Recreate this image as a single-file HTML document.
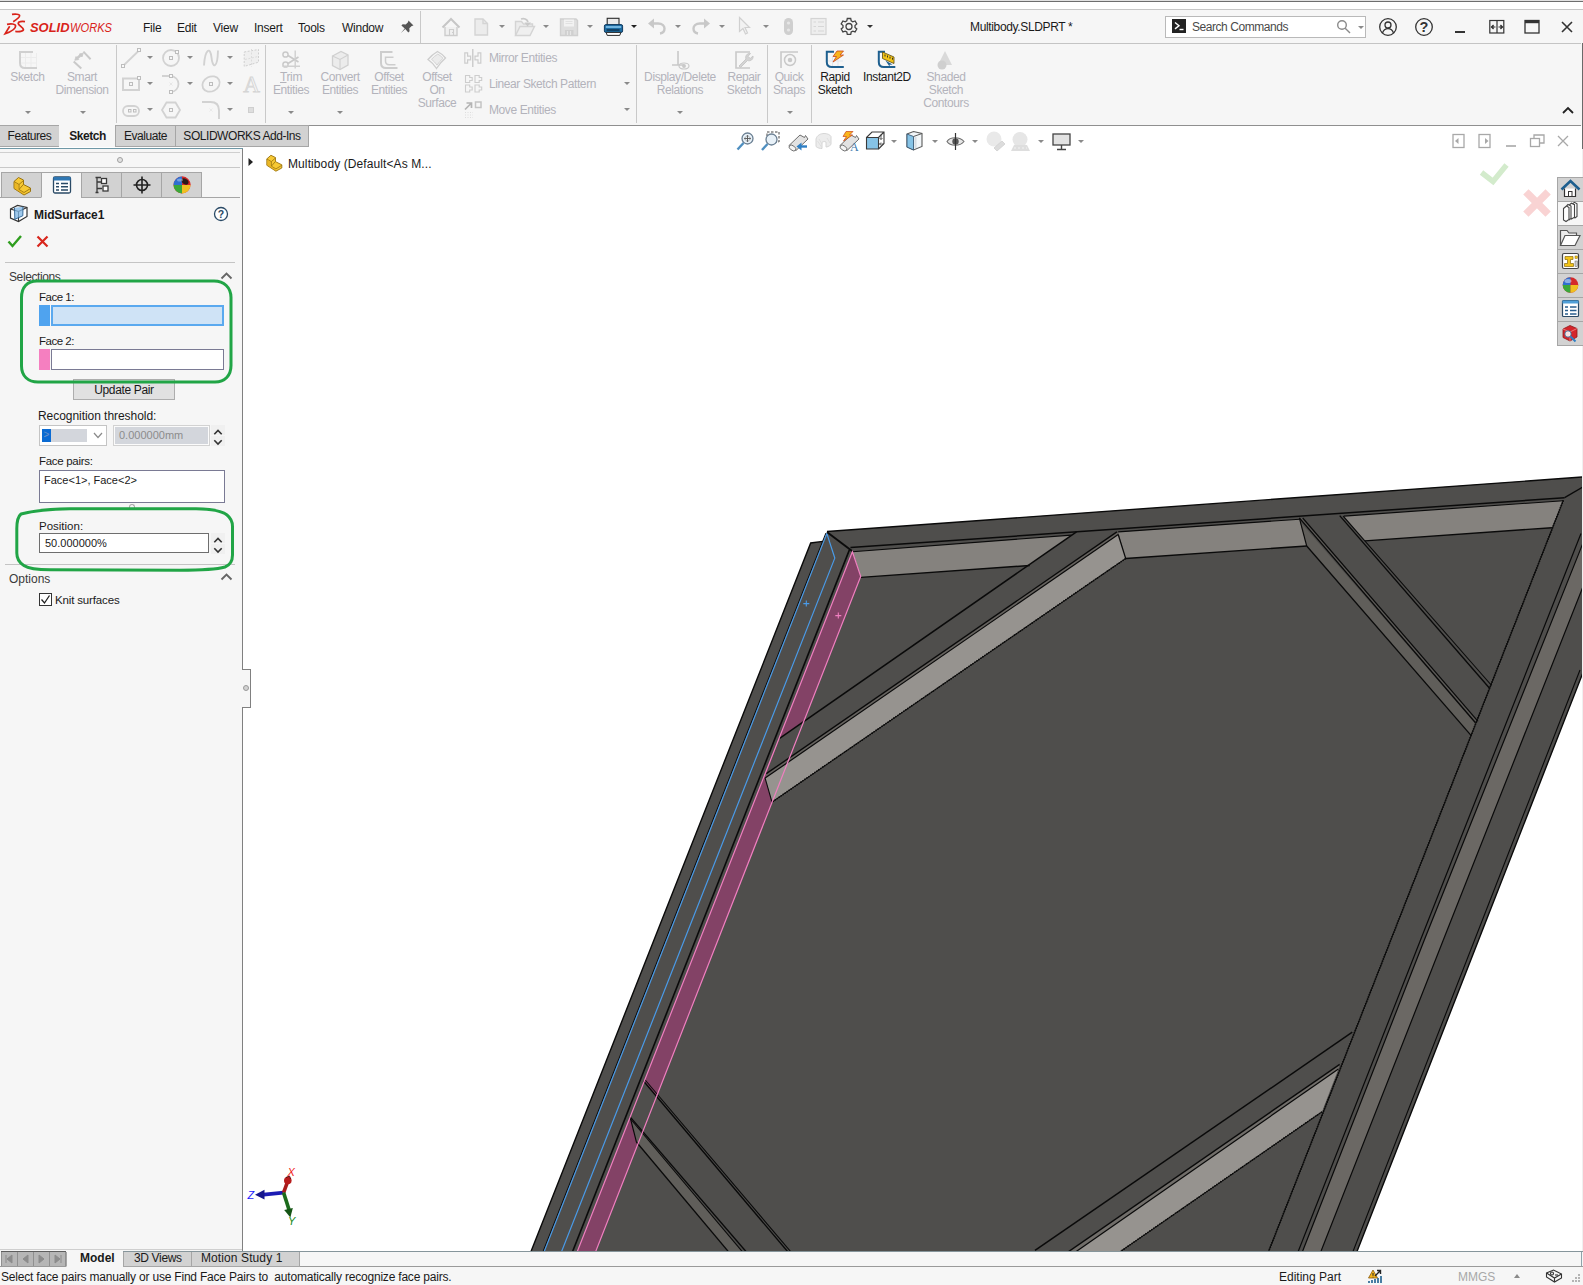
<!DOCTYPE html>
<html lang="en"><head><meta charset="utf-8"><title>SOLIDWORKS - Multibody.SLDPRT</title>
<style>
html,body{margin:0;padding:0}
body{width:1583px;height:1285px;position:relative;overflow:hidden;background:#fff;font-family:"Liberation Sans","DejaVu Sans",sans-serif;font-size:12px;color:#1a1a1a;line-height:1}
.a{position:absolute;white-space:nowrap}
.t{position:absolute;white-space:nowrap;line-height:14px;height:14px}
.dis{color:#b3b3bb}
.c{text-align:center}
.ls{letter-spacing:-.4px}
svg{position:absolute;overflow:visible}
.arr{position:absolute;width:0;height:0;border-left:3px solid transparent;border-right:3px solid transparent;border-top:3.500px solid #8a8a8a;margin-left:.5px;margin-top:.8px}
.arrd{border-top-color:#555}
.vsep{position:absolute;width:1px;background:#c9c9c9}
.tab{position:absolute;top:125px;height:22px;border-bottom:none;letter-spacing:-.45px;border:1px solid #a6a6a6;background:#d2d2d2;box-sizing:border-box;line-height:21px;font-size:12px;text-align:center;color:#1a1a1a}
.itab{position:absolute;top:172px;height:26px;border:1px solid #a6a6a6;background:#d2d2d2;box-sizing:border-box}
.btab{position:absolute;top:1252px;height:15px;letter-spacing:-.3px;border:1px solid #a6a6a6;border-top:none;background:#d2d2d2;box-sizing:border-box;line-height:13px;font-size:12px;text-align:center}
.tp{position:absolute;left:1557px;width:27px;z-index:3;height:25px;background:#d2d2d2;border:1px solid #a6a6a6;box-sizing:border-box}
</style></head>
<body>
<!-- ===== window top border + title bar ===== -->
<div class="a" style="left:0;top:0;width:1583px;height:1px;background:#e2e2e2"></div>
<div class="a" style="left:0;top:1px;width:1583px;height:1px;background:#6e6e6e"></div>
<div class="a" style="left:0;top:2px;width:1583px;height:7px;background:#fff"></div>
<div class="a" style="left:0;top:9px;width:1583px;height:1px;background:#c6c6c6"></div>
<div class="a" style="left:0;top:10px;width:1581px;height:116px;background:#f6f6f6"></div>
<div class="a" style="left:0;top:43px;width:1582px;height:1px;background:#c4c4c4"></div>
<div class="a" style="left:308px;top:125px;width:1274px;height:1px;background:#8f8f8f"></div>
<div class="a" style="left:1581px;top:10px;width:2px;height:116px;background:#f6f6f6"></div>
<div class="a" style="left:1582px;top:43px;width:1px;height:106px;background:#6a6a6a"></div>

<!-- logo -->
<svg style="left:0;top:10px" width="118" height="30" viewBox="0 10 118 30">
 <path d="M12 14.400C15 14 19.500 14 19.600 15.600C19.700 17.600 16 20 13.200 21.800" fill="none" stroke="#d9231a" stroke-width="1.700"/>
 <path d="M7 24.300C11 23.500 15.600 23.800 15.600 26C15.600 29 10 32 5.200 33.600L9.700 26.300" fill="none" stroke="#d9231a" stroke-width="1.700"/>
 <path d="M25 21.600C22 21.200 18.300 21.400 18.200 23.200C18.100 25.200 23.400 27.500 23.400 29.600C23.400 31.600 19 31.800 15.300 31.400" fill="none" stroke="#d9231a" stroke-width="1.800"/>
 <text x="30" y="32.300" font-family="Liberation Sans,sans-serif" font-size="13.500" font-weight="700" font-style="italic" fill="#d9231a" textLength="39.500" lengthAdjust="spacingAndGlyphs">SOLID</text>
 <text x="70" y="32.300" font-family="Liberation Sans,sans-serif" font-size="13.500" font-style="italic" fill="#d9231a" textLength="42" lengthAdjust="spacingAndGlyphs">WORKS</text>
</svg>

<!-- menu -->
<div class="t" style="left:143px;top:21px;font-size:12px;letter-spacing:-.25px">File</div>
<div class="t" style="left:177px;top:21px;font-size:12px;letter-spacing:-.25px">Edit</div>
<div class="t" style="left:213px;top:21px;font-size:12px;letter-spacing:-.25px">View</div>
<div class="t" style="left:254px;top:21px;font-size:12px;letter-spacing:-.25px">Insert</div>
<div class="t" style="left:298px;top:21px;font-size:12px;letter-spacing:-.25px">Tools</div>
<div class="t" style="left:342px;top:21px;font-size:12px;letter-spacing:-.25px">Window</div>
<!-- pin -->
<svg style="left:399px;top:19px" width="16" height="16" viewBox="0 0 16 16"><path d="M9.500 1.500l5 5-1.800.4-2.400 2.400.3 3-1.300 1.200-3-3.400-4.600 4.200 4-4.800-3.300-3 1.300-1.200 3 .2L9 3.200z" fill="#555"/></svg>
<div class="vsep" style="left:420px;top:11px;height:32px"></div>

<!-- quick access icons (disabled grey) -->
<svg style="left:438px;top:14px" width="440" height="26" viewBox="438 14 440 26" fill="none" stroke="#cdcdcd" stroke-width="1.400">
 <!-- home -->
 <path d="M442.500 27.500l8.500-8.500 8.500 8.500" stroke-width="2" stroke="#c6c6c6"/><path d="M445 27v8.500h12V27" fill="#f0f0f0"/><path d="M449.500 35.500v-6h4v6M452 32.500h1" stroke-width="1.100"/>
 <!-- new doc -->
 <path d="M475 19h8l4.500 4.500v11.500h-12.500z" fill="#ececec" stroke="#d4d4d4"/><path d="M483 19v4.500h4.500" stroke="#d4d4d4"/>
 <!-- open -->
 <path d="M515.500 35.500V21.500h6l2 2.500h9v3.500" fill="#ececec" stroke="#d4d4d4"/><path d="M515.500 35.500l4.500-9h14.500l-4.500 9z" fill="#efefef" stroke="#d4d4d4"/><path d="M521 19c3-1 6 0 7 3" stroke="#c9c9c9" stroke-width="1.800"/><path d="M524.500 22.500h6.500l-3.500 4z" fill="#c9c9c9" stroke="none"/>
 <!-- save -->
 <path d="M560.500 19h15.500l1.500 1.500v15h-17z" fill="#dedede" stroke="#d0d0d0"/><rect x="564" y="19.500" width="10" height="7" fill="#f2f2f2" stroke="none"/><path d="M565.500 21.500h7M565.500 23.500h7" stroke="#dcdcdc" stroke-width=".8"/><rect x="565" y="30" width="8.500" height="5.500" fill="#d0d0d0" stroke="none"/><path d="M567.500 31v4M570.500 31v4" stroke="#e6e6e6" stroke-width="1.200"/>
 <!-- undo -->
 <path d="M652 23.500h6c4.500 0 6.500 2.500 6.500 5s-1.500 4.500-4.500 5" stroke-width="2.400" stroke="#c8c8c8"/><path d="M654 18.500l-6 5 6 5z" fill="#c8c8c8" stroke="none"/>
 <!-- redo -->
 <path d="M706 23.500h-6c-4.500 0-6.500 2.500-6.500 5s1.500 4.500 4.500 5" stroke-width="2.400" stroke="#c8c8c8"/><path d="M704 18.500l6 5-6 5z" fill="#c8c8c8" stroke="none"/>
 <!-- select cursor -->
 <path d="M739.500 17.500v14l3.500-3 2.500 5.500 2-1-2.500-5.500h4.500z" fill="#f2f2f2" stroke="#d0d0d0" stroke-width="1.200"/>
 <!-- traffic light / rebuild -->
 <rect x="784" y="18" width="9" height="17" rx="4.500" fill="#cfcfcf" stroke="none"/><circle cx="788.500" cy="23" r="1.600" fill="#e6e6e6" stroke="none"/><circle cx="788.500" cy="30" r="1.600" fill="#e6e6e6" stroke="none"/>
 <!-- file props -->
 <rect x="811" y="18.500" width="15" height="16" fill="#eeeeee" stroke="#d4d4d4" stroke-width="1.200"/><path d="M813.500 22h2.500M818 22h6M813.500 26.500h2.500M818 26.500h6M813.500 31h2.500M818 31h6" stroke="#d6d6d6" stroke-width="1.200"/>
</svg>
<!-- print (colored) -->
<svg style="left:603px;top:17px" width="21" height="20" viewBox="0 0 21 20">
 <rect x="4.200" y="1.300" width="11.800" height="7" fill="#e9e9e9" stroke="#2a2a2a" stroke-width="1.100"/>
 <rect x="1.400" y="7.600" width="18.200" height="7.800" rx="1.500" fill="#1d6da3" stroke="#123a5e" stroke-width="1"/>
 <rect x="2.800" y="9.200" width="15.400" height="1.600" fill="#86c6ee"/>
 <rect x="3.600" y="12.300" width="13" height="1.400" fill="#0f2f4a"/>
 <path d="M3.200 15.400h14.600l-1 3h-12.600z" fill="#fff" stroke="#2a2a2a" stroke-width="1"/>
</svg>
<!-- options gear -->
<svg style="left:839px;top:17px" width="20" height="20" viewBox="0 0 20 20" fill="none" stroke="#444" stroke-width="1.300">
 <path d="M8.300 1.500h3.400l.5 2.400 1.600.9 2.300-.8 1.700 2.900-1.800 1.600v1.900l1.800 1.600-1.700 2.900-2.300-.8-1.600.9-.5 2.400H8.300l-.5-2.400-1.600-.9-2.300.8-1.700-2.900L4 10.400V8.500L2.200 6.900l1.700-2.900 2.300.8 1.600-.9z"/>
 <circle cx="10" cy="9.500" r="3"/>
</svg>
<!-- small dropdown arrows of quick access -->
<div class="arr" style="left:498px;top:24px"></div>
<div class="arr" style="left:542px;top:24px"></div>
<div class="arr" style="left:586px;top:24px"></div>
<div class="arr arrd" style="left:630px;top:24px;border-top-color:#222"></div>
<div class="arr" style="left:674px;top:24px"></div>
<div class="arr" style="left:718px;top:24px"></div>
<div class="arr" style="left:762px;top:24px"></div>
<div class="arr arrd" style="left:866px;top:24px;border-top-color:#333"></div>

<!-- doc title -->
<div class="t" style="left:970px;top:20px;font-size:12px;letter-spacing:-.35px">Multibody.SLDPRT *</div>

<!-- search box -->
<div class="a" style="left:1165px;top:16px;width:201px;height:22px;box-sizing:border-box;border:1px solid #b9b9b9;background:#fff"></div>
<div class="a" style="left:1172px;top:19px;width:14px;height:14px;background:#222"></div>
<svg style="left:1172px;top:19px" width="14" height="14" viewBox="0 0 14 14"><path d="M3 3.500l4 3.200-4 3.200" fill="none" stroke="#fff" stroke-width="1.400"/><path d="M7.500 10.500h4" stroke="#fff" stroke-width="1.400"/></svg>
<div class="t" style="left:1192px;top:20px;font-size:12px;color:#4a4a4a;letter-spacing:-.45px">Search Commands</div>
<svg style="left:1336px;top:19px" width="16" height="16" viewBox="0 0 16 16" fill="none" stroke="#8a8a8a" stroke-width="1.400"><circle cx="6" cy="6" r="4.300"/><path d="M9.200 9.200l4.800 4.800"/></svg>
<div class="arr" style="left:1357px;top:25px;border-left-width:3px;border-right-width:3px;border-top-width:3.500px"></div>

<!-- user / help / window controls -->
<svg style="left:1378px;top:17px" width="20" height="20" viewBox="0 0 20 20" fill="none" stroke="#333" stroke-width="1.300"><circle cx="10" cy="10" r="8.300"/><circle cx="10" cy="8" r="3"/><path d="M4.500 16c1-3.200 3-4.300 5.500-4.300s4.500 1.100 5.500 4.300"/></svg>
<svg style="left:1414px;top:17px" width="20" height="20" viewBox="0 0 20 20" fill="none" stroke="#333" stroke-width="1.300"><circle cx="10" cy="10" r="8.300"/><text x="10" y="15" text-anchor="middle" font-family="Liberation Sans,sans-serif" font-size="14.500" font-weight="700" fill="#333" stroke="none">?</text></svg>
<div class="a" style="left:1455px;top:31px;width:10px;height:2px;background:#333"></div>
<svg style="left:1489px;top:19px" width="16" height="16" viewBox="0 0 16 16" fill="none" stroke="#333" stroke-width="1.200"><rect x=".8" y="1.500" width="14" height="12.500"/><path d="M8 1.500v12.500M2.500 8h4M13.500 8h-4"/><path d="M4.500 6l-2 2 2 2M11.500 6l2 2-2 2" fill="#333"/></svg>
<svg style="left:1524px;top:19px" width="16" height="16" viewBox="0 0 16 16" fill="none" stroke="#333" stroke-width="1.300"><rect x="1" y="1.500" width="14" height="12.500"/><path d="M1 3h14" stroke-width="2.400"/></svg>
<svg style="left:1561px;top:21px" width="12" height="12" viewBox="0 0 12 12" fill="none" stroke="#333" stroke-width="1.600"><path d="M1 1l10 10M11 1L1 11"/></svg>
<!-- ===== ribbon (Sketch tab, mostly disabled) ===== -->
<svg style="left:0;top:44px" width="1000" height="80" viewBox="0 44 1000 80" fill="none" stroke="#c9c9c9" stroke-width="1.500">
 <!-- Sketch icon -->
 <path d="M33 52H20v11c0 3 2 5 5 5h12" stroke-width="2" stroke="#d0d0d0"/><path d="M25.500 53v14M31 53v14M36.500 53v14M21 57.500h16M21 63h16" stroke="#ececec" stroke-width="1"/>
 <!-- Smart dimension icon -->
 <path d="M83.400 51.600l7.200 7.600M73.700 61.400l7.600 7.200" stroke-width="2"/><path d="M76.500 58.800l5-4.200" stroke-width="2.600"/><path d="M74.800 60.300l1.200-3.800 2.800 3zM83.300 53.200l-1.300 3.800-2.700-3z" fill="#c9c9c9" stroke-width=".8"/>
 <!-- col1: line, rect, slot -->
 <path d="M123.500 65.500l15.500-15" stroke-width="1.800" stroke="#d2d2d2"/><rect x="121.500" y="64.500" width="3" height="3" fill="#f9f9f9" stroke="#bdbdbd" stroke-width="1"/><rect x="137.500" y="48.500" width="3" height="3" fill="#f9f9f9" stroke="#bdbdbd" stroke-width="1"/>
 <rect x="123" y="78.500" width="16" height="11.500" stroke-width="2" stroke="#d2d2d2"/><rect x="129.500" y="82.500" width="3" height="3" stroke="#bdbdbd" stroke-width="1"/><rect x="137.500" y="76.500" width="3" height="3" fill="#f9f9f9" stroke="#bdbdbd" stroke-width="1"/>
 <rect x="123" y="106" width="16" height="10" rx="5" stroke-width="1.800" stroke="#d2d2d2"/><rect x="128.500" y="109.500" width="2.500" height="2.500" stroke="#bdbdbd" stroke-width="1"/><rect x="133.500" y="109.500" width="2.500" height="2.500" stroke="#bdbdbd" stroke-width="1"/>
 <!-- col2: circle, arc, polygon -->
 <circle cx="171" cy="58" r="8" stroke-width="1.800" stroke="#d2d2d2"/><rect x="169.500" y="56.500" width="3" height="3" stroke="#bdbdbd" stroke-width="1"/><rect x="175.500" y="50.500" width="3" height="3" fill="#f9f9f9" stroke="#bdbdbd" stroke-width="1"/>
 <path d="M162 76h8c5.500 0 8.500 4 8.500 8s-3 8-8 8" stroke-width="1.800" stroke="#d2d2d2"/><rect x="169.500" y="74.500" width="3" height="3" fill="#f9f9f9" stroke="#bdbdbd" stroke-width="1"/><rect x="169.500" y="90.500" width="3" height="3" fill="#f9f9f9" stroke="#bdbdbd" stroke-width="1"/><path d="M169.500 82.500l3 3M172.500 82.500l-3 3" stroke="#e6e6e6" stroke-width="1"/>
 <path d="M166.500 102.500h9l4.500 7.500-4.500 7.500h-9l-4.500-7.500z" stroke-width="1.800" stroke="#d2d2d2"/><rect x="169.500" y="108.500" width="3" height="3" stroke="#bdbdbd" stroke-width="1"/>
 <!-- col3: spline, ellipse, fillet -->
 <path d="M204 65.500c1-17 6.500-19 7.500-8s6 12 6.500-7" stroke-width="1.900" stroke="#d2d2d2"/>
 <ellipse cx="211" cy="84" rx="9" ry="7.300" transform="rotate(-28 211 84)" stroke-width="1.800" stroke="#d2d2d2"/><rect x="209.500" y="82.500" width="3" height="3" stroke="#bdbdbd" stroke-width="1"/>
 <path d="M202 102h8.500c5.500 0 8.500 3 8.500 8.500v8.500" stroke-width="1.900" stroke="#d2d2d2"/><path d="M209.500 108.500l3 3M212.500 108.500l-3 3" stroke="#e9e9e9" stroke-width="1"/>
 <!-- col4: grid, text, point -->
 <path d="M244.200 52l14.300-2.500v12.700l-14.300 4.200z" fill="#efefef" stroke="#cfcfcf" stroke-dasharray="2 1.500" stroke-width="1"/><path d="M251.500 49v18M245 59.500l13-3" stroke="#dcdcdc" stroke-dasharray="2 1.500" stroke-width="1"/>
 <text x="251.500" y="92" text-anchor="middle" font-family="Liberation Serif,serif" font-size="23" fill="#f6f6f6" stroke="#d4d4d4" stroke-width=".9">A</text>
 <rect x="248.500" y="107.500" width="5" height="5" fill="#dedede" stroke="#cfcfcf" stroke-width="1"/>
 <!-- Trim -->
 <circle cx="285.500" cy="54.500" r="2.600" stroke-width="1.500"/><circle cx="285.500" cy="64.500" r="2.600" stroke-width="1.500"/>
 <path d="M288 55.500l10.500 6.500M288 63.500l10.500-6.500" stroke-width="1.700"/><path d="M295.200 50.500v18M282.500 66.300h17.500" stroke-width="1.400" stroke="#d0d0d0"/>
 <!-- Convert -->
 <path d="M332.500 56l8.500-4.500 7 3.500v10l-8 4.500-7.500-4z" fill="#ececec" stroke="#d0d0d0" stroke-width="1.300"/><path d="M332.500 56l7.500 3.500 8-4.500M340 59.500v10" stroke="#d0d0d0" stroke-width="1.100"/>
 <!-- Offset -->
 <path d="M392.500 52H381v11c0 3 2 5 5 5h11.500" stroke-width="2" stroke="#cdcdcd"/><path d="M393.500 57.300h-8v3.700c0 2.200 1.500 3.700 3.700 3.700h6.300" stroke-width="1.500" stroke="#cdcdcd"/>
 <!-- Offset on surface -->
 <path d="M428 59.500c3-3.500 6-6 9.500-8 3 1.500 5.500 3.500 8 6.500-3.500 3-6.500 6.500-9 10.500-2-3.500-5-6.500-8.500-9z" stroke-width="1.300" stroke="#cdcdcd"/><path d="M431.500 59.300c2-2.200 4-3.800 6.300-5.200 2 1 3.700 2.400 5.200 4.200-2.300 2-4.300 4.300-6 6.800-1.500-2.300-3.300-4.200-5.500-5.800z" fill="#ebebeb" stroke="#d4d4d4" stroke-width="1"/>
 <!-- Mirror entities -->
 <path d="M472.800 49v18" stroke="#c4c4c4" stroke-width="1.200"/><path d="M464.800 52.800h2.800v3.400h3v3.600h-3v3.400h-2.800zM480.800 52.800h-2.800v3.400h-3v3.600h3v3.400h2.800z" stroke="#cdcdcd" stroke-width="1.200"/>
 <!-- Linear pattern -->
 <path d="M465.500 75.500h4.200v2h2.500v3h-2.500v2h-4.200zM475 75.500h4.200v2h2.500v3h-2.500v2H475zM465.500 85h4.200v2h2.500v3h-2.500v2h-4.200zM475 85h4.200v2h2.500v3h-2.500v2H475z" stroke="#cdcdcd" stroke-width="1.100"/>
 <!-- Move -->
 <path d="M465 109.500l6-6M466.500 103h5v5" stroke="#b4b4b4" stroke-width="1.700"/><rect x="475.500" y="102" width="5.500" height="5.500" stroke="#c4c4c4" stroke-width="1.500"/><path d="M465 112.500h8M465 115h8M465 117.500h8" stroke="#dedede" stroke-width="1" stroke-dasharray="1 1.500"/>
 <!-- Display/Delete relations -->
 <path d="M678 51v14M672 65h12" stroke-width="1.600"/><ellipse cx="684" cy="66" rx="5" ry="3" stroke-width="1.200"/><circle cx="684" cy="66" r="1.200" fill="#c9c9c9"/>
 <!-- Repair sketch -->
 <path d="M750 52h-14v16h14" stroke-width="1.600"/><path d="M739 66l7-7c-1-3 1-6 4.500-5.500l-2.500 2.800 2.200 2.200 2.800-2.500c.5 3.500-2.500 5.500-5.500 4.500l-7 7z" fill="#d4d4d4" stroke-width="1"/>
 <!-- Quick snaps -->
 <path d="M781 68V52h17" stroke-width="1.600"/><circle cx="790" cy="60" r="5.500"/><circle cx="790" cy="60" r="1.500" fill="#c9c9c9"/>
 <!-- Shaded sketch contours -->
 <path d="M945 51l7 14h-14z" fill="#d9d9d9" stroke="none"/><circle cx="942" cy="65" r="4.500" fill="#cfcfcf" stroke="none"/>
</svg>

<!-- ribbon labels -->
<div class="t dis c ls" style="left:0;top:70px;width:55px;font-size:12px">Sketch</div>
<div class="t dis c ls" style="left:50px;top:70px;width:64px;font-size:12px">Smart</div>
<div class="t dis c ls" style="left:50px;top:83px;width:64px;font-size:12px">Dimension</div>
<div class="arr" style="left:24px;top:110px"></div>
<div class="arr" style="left:79px;top:110px"></div>
<div class="vsep" style="left:116px;top:45px;height:78px"></div>
<div class="arr" style="left:146.500px;top:55px"></div><div class="arr" style="left:146.500px;top:81px"></div><div class="arr" style="left:146.500px;top:107px"></div>
<div class="arr" style="left:186.500px;top:55px"></div><div class="arr" style="left:186.500px;top:81px"></div>
<div class="arr" style="left:226.500px;top:55px"></div><div class="arr" style="left:226.500px;top:81px"></div><div class="arr" style="left:226.500px;top:107px"></div>
<div class="vsep" style="left:265px;top:45px;height:78px"></div>

<div class="t dis c ls" style="left:268px;top:70px;width:46px"><span style="text-decoration:underline">T</span>rim</div>
<div class="t dis c ls" style="left:268px;top:83px;width:46px">Entities</div>
<div class="arr" style="left:287px;top:110px"></div>
<div class="t dis c ls" style="left:316px;top:70px;width:48px">Convert</div>
<div class="t dis c ls" style="left:316px;top:83px;width:48px">Entities</div>
<div class="arr" style="left:336px;top:110px"></div>
<div class="t dis c ls" style="left:366px;top:70px;width:46px">Offset</div>
<div class="t dis c ls" style="left:366px;top:83px;width:46px">Entities</div>
<div class="t dis c ls" style="left:414px;top:70px;width:46px">Offset</div>
<div class="t dis c ls" style="left:414px;top:83px;width:46px">On</div>
<div class="t dis c ls" style="left:414px;top:96px;width:46px">Surface</div>
<div class="t dis ls" style="left:489px;top:51px">Mirror Entities</div>
<div class="t dis ls" style="left:489px;top:77px">Linear Sketch Pattern</div>
<div class="t dis ls" style="left:489px;top:103px">Move Entities</div>
<div class="arr" style="left:623.500px;top:81px"></div><div class="arr" style="left:623.500px;top:107px"></div>
<div class="vsep" style="left:636px;top:45px;height:78px"></div>
<div class="t dis c ls" style="left:640px;top:70px;width:80px">Display/Delete</div>
<div class="t dis c ls" style="left:640px;top:83px;width:80px">Relations</div>
<div class="arr" style="left:676px;top:110px"></div>
<div class="t dis c ls" style="left:722px;top:70px;width:44px">Repair</div>
<div class="t dis c ls" style="left:722px;top:83px;width:44px">Sketch</div>
<div class="vsep" style="left:767px;top:45px;height:78px"></div>
<div class="t dis c ls" style="left:769px;top:70px;width:40px">Quick</div>
<div class="t dis c ls" style="left:769px;top:83px;width:40px">Snaps</div>
<div class="arr" style="left:786px;top:110px"></div>
<div class="vsep" style="left:811px;top:45px;height:78px"></div>

<!-- Rapid sketch (enabled) -->
<svg style="left:824px;top:49px" width="22" height="22" viewBox="0 0 22 22">
 <path d="M10 2.800H2.800V13c0 3 2 5 5 5h12" fill="none" stroke="#1d5f8f" stroke-width="2"/>
 <path d="M8.500 8v9M14 10v7M4 12h15" stroke="#dfe6ec" stroke-width="1"/>
 <path d="M13 2h6.500l-3.500 4h3.500l-10.500 7 3.500-5.500h-3.500z" fill="#f9b51c" stroke="#c9441a" stroke-width=".8"/>
</svg>
<div class="t c ls" style="left:813px;top:70px;width:44px">Rapid</div>
<div class="t c ls" style="left:813px;top:83px;width:44px">Sketch</div>
<!-- Instant2D -->
<svg style="left:876px;top:49px" width="22" height="22" viewBox="0 0 22 22">
 <path d="M9 2.800H2.800V13c0 3 2 5 5 5h11.500" fill="none" stroke="#1d5f8f" stroke-width="2"/>
 <path d="M6.500 3l11.500 5v6.500l-11.500-5z" fill="#f2c418" stroke="#5a4a10" stroke-width=".8"/>
 <path d="M9 7.500v-2M11.500 8.500v-2M14 9.600v-2M16.500 10.700v-2" stroke="#222" stroke-width=".9"/>
 <path d="M9.500 11.500l7 4-3 .2.500 2.500z" fill="#1d5f8f"/>
</svg>
<div class="t c ls" style="left:858px;top:70px;width:58px">Instant2D</div>
<div class="t dis c ls" style="left:918px;top:70px;width:56px">Shaded</div>
<div class="t dis c ls" style="left:918px;top:83px;width:56px">Sketch</div>
<div class="t dis c ls" style="left:918px;top:96px;width:56px">Contours</div>
<!-- ribbon collapse chevron -->
<svg style="left:1561px;top:105px" width="14" height="10" viewBox="0 0 14 10"><path d="M2 8l5-5 5 5" fill="none" stroke="#222" stroke-width="1.800"/></svg>

<!-- command manager tabs -->
<div class="tab" style="left:-1px;width:61px">Features</div>
<div class="tab" style="left:59px;width:57px;background:#f6f6f6;border-color:#f6f6f6;font-weight:700;height:22px">Sketch</div>
<div class="tab" style="left:115px;width:61px">Evaluate</div>
<div class="tab" style="left:175px;width:134px">SOLIDWORKS Add-Ins</div>
<!-- ===== left PropertyManager panel ===== -->
<div class="a" style="left:0;top:148px;width:242px;height:1104px;background:#f6f6f6"></div>
<div class="a" style="left:242px;top:147px;width:1px;height:1104px;background:#808080"></div>
<div class="a" style="left:0;top:147px;width:243px;height:1px;background:#fff"></div>
<div class="a" style="left:0;top:148px;width:243px;height:1px;background:#6f98a6"></div>
<div class="a" style="left:0;top:152px;width:240px;height:1px;background:#cfcfcf"></div>
<div class="a" style="left:117px;top:157px;width:6px;height:6px;border:1px solid #a0a0a0;border-radius:50%;box-sizing:border-box;background:#e2e2e2"></div>
<div class="a" style="left:0;top:167px;width:240px;height:1px;background:#c8c8c8"></div>

<!-- manager icon tabs -->
<div class="a" style="left:0;top:197px;width:240px;height:1px;background:#a6a6a6"></div>
<div class="itab" style="left:1px;width:41px"></div>
<div class="itab" style="left:41px;width:41px;background:#f6f6f6;border-bottom-color:#f6f6f6"></div>
<div class="itab" style="left:81px;width:41px"></div>
<div class="itab" style="left:121px;width:41px"></div>
<div class="itab" style="left:161px;width:41px"></div>
<!-- feature tree icon (yellow part) -->
<svg style="left:12px;top:175px" width="22" height="22" viewBox="0 0 22 22"><path d="M2 6.500l4.500-4 5 2.500v4.500l7 3.500v3.500l-6.500 3.500-10-6.500z" fill="#f7c934" stroke="#9a7410" stroke-width="1"/><path d="M2 6.500l5 3 4.500-4M7 9.500v5l5 3 6.500-4M7 14.500l4.500-5.200" fill="none" stroke="#9a7410" stroke-width=".9"/><path d="M2.500 7.300l4 2.500v4.500l5 3.200v2l-9-6z" fill="#e0a81c" opacity=".55"/></svg>
<!-- property manager icon -->
<svg style="left:52px;top:175px" width="20" height="20" viewBox="0 0 20 20"><rect x="1.500" y="2" width="17" height="16" rx="1.500" fill="#fff" stroke="#2a4a66" stroke-width="1.300"/><rect x="1.500" y="2" width="17" height="3.500" fill="#2f77b3"/><path d="M4 8.500h3M9 8.500h7M4 11.800h3M9 11.800h7M4 15h3M9 15h7" stroke="#2a4a66" stroke-width="1.400"/></svg>
<!-- config manager icon -->
<svg style="left:92px;top:175px" width="20" height="20" viewBox="0 0 20 20" fill="none" stroke="#3a3a3a" stroke-width="1.300"><path d="M5 2v16M3.500 2.500H9M3.500 17.500H6.500M5 7h5M5 13.500h5"/><rect x="9.500" y="3.500" width="5" height="5" fill="#fff"/><rect x="11" y="11" width="5" height="5" fill="#fff"/></svg>
<!-- dimxpert icon -->
<svg style="left:132px;top:175px" width="20" height="20" viewBox="0 0 20 20" fill="none" stroke="#222" stroke-width="1.600"><circle cx="10" cy="10" r="5.500"/><path d="M10 1.500v17M1.500 10h17"/></svg>
<!-- display manager icon -->
<svg style="left:172px;top:175px" width="20" height="20" viewBox="0 0 20 20"><circle cx="10" cy="10" r="8.500" fill="#e33"/><path d="M10 10V1.500A8.500 8.500 0 0 0 1.500 10z" fill="#2f6fd0"/><path d="M10 10H1.500A8.500 8.500 0 0 0 10 18.500z" fill="#3aa83a"/><path d="M10 10v8.500A8.500 8.500 0 0 0 18.500 10z" fill="#f0c020"/><path d="M10 10h8.500A8.500 8.500 0 0 0 10 1.500z" fill="#d42a2a"/><ellipse cx="13" cy="6.500" rx="3.800" ry="2.600" transform="rotate(35 13 6.500)" fill="#2a1a1a"/><ellipse cx="8" cy="5" rx="3" ry="1.500" fill="#fff" opacity=".35"/></svg>

<!-- feature header -->
<svg style="left:9px;top:204px" width="20" height="19" viewBox="0 0 20 19"><path d="M1.500 5l7-3.500 9.500 2v9l-8.500 5-8-3.500z" fill="#fff" stroke="#333" stroke-width="1.200"/><path d="M1.500 5l8 2.500 8.500-4M9.500 7.500v10" fill="none" stroke="#333" stroke-width="1.100"/><path d="M5.500 3.800l.3 11.500 8-3.500.2-9" fill="#7fb7e6" fill-opacity=".75" stroke="#2a5f8f" stroke-width=".9"/></svg>
<div class="t" style="left:34px;top:208px;font-size:12px;font-weight:700;letter-spacing:-.1px">MidSurface1</div>
<svg style="left:213px;top:206px" width="16" height="16" viewBox="0 0 16 16"><circle cx="8" cy="8" r="6.500" fill="#fff" stroke="#2a4a66" stroke-width="1.300"/><text x="8" y="11.800" text-anchor="middle" font-family="Liberation Sans,sans-serif" font-size="10.500" font-weight="700" fill="#2a4a66">?</text></svg>
<!-- ok / cancel -->
<svg style="left:7px;top:234px" width="16" height="14" viewBox="0 0 16 14"><path d="M1.500 7.500l4 4.500L14 2" fill="none" stroke="#2f9e1f" stroke-width="2.400"/></svg>
<svg style="left:36px;top:235px" width="13" height="13" viewBox="0 0 13 13"><path d="M1.500 1.500l10 10M11.500 1.500l-10 10" fill="none" stroke="#d8261c" stroke-width="2.200"/></svg>
<div class="a" style="left:5px;top:262px;width:230px;height:1px;background:#c4c4c4"></div>

<!-- Selections group -->
<div class="t" style="left:9px;top:270px;color:#3a3a3a;letter-spacing:-.4px">Selections</div>
<svg style="left:220px;top:272px" width="13" height="8" viewBox="0 0 13 8"><path d="M1.500 6.500l5-5 5 5" fill="none" stroke="#666" stroke-width="1.900"/></svg>
<div class="t" style="left:39px;top:290px;font-size:11.500px;letter-spacing:-.5px">Face 1:</div>
<div class="a" style="left:39px;top:305px;width:11px;height:21px;background:#4fa3ef"></div>
<div class="a" style="left:51px;top:305px;width:173px;height:21px;box-sizing:border-box;border:2px solid #5aa9ef;background:#cfe3f6"></div>
<div class="t" style="left:39px;top:334px;font-size:11.500px;letter-spacing:-.5px">Face 2:</div>
<div class="a" style="left:39px;top:349px;width:11px;height:21px;background:#f57fc0"></div>
<div class="a" style="left:51px;top:349px;width:173px;height:21px;box-sizing:border-box;border:1px solid #7a7a94;background:#fff"></div>
<div class="a" style="left:73px;top:379px;width:102px;height:21px;box-sizing:border-box;border:1px solid #adadad;background:#e1e1e1"></div>
<div class="t c" style="left:73px;top:383px;width:102px;letter-spacing:-.35px">Update Pair</div>
<!-- green hand-drawn highlight 1 -->
<svg style="left:0;top:0" width="243" height="700" viewBox="0 0 243 700" fill="none" stroke="#21a546" stroke-width="3"><path d="M37 281H214c10 0 17 6.500 17 16.500v68c0 10-6 16.500-16 16.500H38c-10 0-16.500-6-16.500-16v-68.500c0-10 5.500-16.500 15.500-16.500z"/></svg>

<div class="t" style="left:38px;top:409px;font-size:12px;letter-spacing:-.05px">Recognition threshold:</div>
<div class="a" style="left:39px;top:425px;width:68px;height:21px;box-sizing:border-box;border:1px solid #c4c4c4;background:#fff"></div>
<div class="a" style="left:42px;top:429px;width:45px;height:13px;background:#d3d6dc"></div>
<div class="a" style="left:42px;top:429px;width:9px;height:13px;background:#0b6bd3;color:#6f93c8;font-size:10px;line-height:12px;text-align:center;overflow:hidden">&gt;</div>
<svg style="left:93px;top:432px" width="10" height="7" viewBox="0 0 10 7"><path d="M1 1l4 4.500L9 1" fill="none" stroke="#8a8a8a" stroke-width="1.200"/></svg>
<div class="a" style="left:113px;top:425px;width:97px;height:21px;box-sizing:border-box;border:1px solid #d2d2d2;box-shadow:inset 0 0 0 1px #fbfbfb;background:#d3d6dc"></div>
<div class="t" style="left:119px;top:428px;font-size:11px;color:#8c8c8c">0.000000mm</div>
<div class="a" style="left:211px;top:425px;width:14px;height:10px;background:#f0f0f0"></div><div class="a" style="left:211px;top:436px;width:14px;height:10px;background:#f0f0f0"></div>
<svg style="left:212px;top:427px" width="12" height="19" viewBox="0 0 12 19" fill="none" stroke="#333" stroke-width="1.600"><path d="M2.300 7.300l3.700-3.800 3.700 3.800M2.300 13.200l3.700 3.800 3.700-3.800"/></svg>

<div class="t" style="left:39px;top:454px;font-size:11.500px;letter-spacing:-.3px">Face pairs:</div>
<div class="a" style="left:39px;top:470px;width:186px;height:33px;box-sizing:border-box;border:1px solid #7a7a94;background:#fff"></div>
<div class="t" style="left:44px;top:473px;font-size:11px">Face&lt;1&gt;, Face&lt;2&gt;</div>
<div class="a" style="left:129px;top:504px;width:6px;height:4px;border:1px solid #a8a8a8;border-bottom:none;border-radius:3px 3px 0 0;box-sizing:border-box"></div>

<div class="t" style="left:39px;top:519px;font-size:11.500px">Position:</div>
<div class="a" style="left:39px;top:533px;width:170px;height:20px;box-sizing:border-box;border:1px solid #6e6e6e;background:#fff"></div>
<div class="t" style="left:45px;top:536px;font-size:11px">50.000000%</div>
<div class="a" style="left:211px;top:533px;width:14px;height:10px;background:#f0f0f0"></div><div class="a" style="left:211px;top:544px;width:14px;height:10px;background:#f0f0f0"></div>
<svg style="left:212px;top:535px" width="12" height="19" viewBox="0 0 12 19" fill="none" stroke="#333" stroke-width="1.600"><path d="M2.300 7.300l3.700-3.800 3.700 3.800M2.300 13.200l3.700 3.800 3.700-3.800"/></svg>
<div class="a" style="left:5px;top:564px;width:230px;height:1px;background:#c4c4c4"></div>
<!-- green hand-drawn highlight 2 -->
<svg style="left:0;top:0" width="243" height="700" viewBox="0 0 243 700" fill="none" stroke="#21a546" stroke-width="3"><path d="M21 514C35 510.500 55 509 70 508.800L196 508.800C212 509 222 511 227 515C231.300 518.500 232.500 521.500 232.500 526.500L232.500 555C232.500 561 230 565 225 567C215 569.800 195 570.200 180 570.200L50 569.800C38 569.800 28 568.300 23.800 565.500C19 562.500 16.800 559 16.800 553L16.800 528.500C16.800 521.500 18 516.500 21 514Z"/></svg>

<!-- Options group -->
<div class="t" style="left:9px;top:572px;color:#3a3a3a">Options</div>
<svg style="left:220px;top:573px" width="13" height="8" viewBox="0 0 13 8"><path d="M1.500 6.500l5-5 5 5" fill="none" stroke="#666" stroke-width="1.900"/></svg>
<div class="a" style="left:39px;top:593px;width:13px;height:13px;box-sizing:border-box;border:1px solid #333;background:#fff"></div>
<svg style="left:40px;top:594px" width="11" height="11" viewBox="0 0 11 11"><path d="M1.500 5.500l3 3.500 5-7.500" fill="none" stroke="#222" stroke-width="1.300"/></svg>
<div class="t" style="left:55px;top:593px;font-size:11.500px;letter-spacing:-.15px">Knit surfaces</div>
<!-- panel collapse handle -->
<div class="a" style="left:242px;top:669px;width:9px;height:39px;box-sizing:border-box;border:1px solid #808080;border-left:none;background:#f6f6f6"></div>
<div class="a" style="left:243px;top:685px;width:6px;height:6px;border:1px solid #9a9a9a;border-radius:50%;box-sizing:border-box;background:#d2d2d2"></div>
<!-- ===== graphics viewport ===== -->
<!-- flyout feature tree -->
<svg style="left:247px;top:157px" width="8" height="10" viewBox="0 0 8 10"><path d="M1.500 1l4.500 4-4.500 4z" fill="#222"/></svg>
<svg style="left:265px;top:153px" width="20" height="20" viewBox="0 0 22 22"><path d="M2 6.500l4.500-4 5 2.500v4.500l7 3.500v3.500l-6.500 3.500-10-6.500z" fill="#f7c934" stroke="#9a7410" stroke-width="1"/><path d="M2 6.500l5 3 4.500-4M7 9.500v5l5 3 6.500-4M7 14.500l4.500-5.200" fill="none" stroke="#9a7410" stroke-width=".9"/><path d="M2.500 7.300l4 2.500v4.500l5 3.200v2l-9-6z" fill="#e0a81c" opacity=".55"/></svg>
<div class="t" style="left:288px;top:157px;font-size:12px;letter-spacing:.1px">Multibody (Default&lt;As M...</div>

<!-- heads-up view toolbar -->
<svg style="left:730px;top:128px" width="370" height="26" viewBox="730 128 370 26" fill="none">
 <!-- zoom to fit -->
 <circle cx="747.500" cy="138.500" r="5.500" fill="#e8f1f8" stroke="#6a7f92" stroke-width="1.300"/><path d="M743.500 143l-6 6.500" stroke="#4f8fc0" stroke-width="2.400"/><path d="M744.500 138.500h6M747.500 135.500v6" stroke="#555" stroke-width=".9"/><path d="M746.300 136.500l1.200-1.300 1.200 1.300M746.300 140.500l1.200 1.300 1.200-1.300M745.500 137.300l-1.300 1.200 1.300 1.200M749.500 137.300l1.300 1.200-1.300 1.200" stroke="#555" stroke-width=".8"/>
 <!-- zoom area -->
 <rect x="767" y="132" width="12" height="10" stroke="#444" stroke-width="1" stroke-dasharray="2.500 1.500"/><circle cx="771.500" cy="139.500" r="5.500" fill="#e8f1f8" stroke="#6a7f92" stroke-width="1.300"/><path d="M767.500 144l-5.500 6" stroke="#4f8fc0" stroke-width="2.400"/>
 <!-- previous view -->
 <path d="M789 145.500l11-10.500 4.500 2.500 1-2 2.500 3.500-12 11.500c-3 0-6.500-2-7-5z" fill="#e2e2e2" stroke="#6e6e6e" stroke-width="1"/><ellipse cx="792.500" cy="148" rx="3.800" ry="2.300" transform="rotate(35 792.500 148)" fill="#f4f4f4" stroke="#6e6e6e" stroke-width=".9"/><path d="M807 146.500h-7" stroke="#2f7fc4" stroke-width="2.400"/><path d="M801.500 142.500l-5 4 5 4z" fill="#2f7fc4"/>
 <!-- section view (disabled) -->
 <path d="M816 139c1-4 5-5.500 8-5.500s6 1 7 3v8c-2 2-4 2.500-5 2.500v-5c-1.500-.8-3-.5-4 .5v6c-2 0-4.500-.5-6-2z" fill="#ececec" stroke="#d6d6d6" stroke-width="1"/><path d="M817.500 141l4 6M819 139l3 5M827 138l3 5" stroke="#dcdcdc" stroke-width=".8"/>
 <!-- dynamic annotation views -->
 <path d="M840 145.500l11-10.500 4.500 2.500 1-2 2.500 3.500-12 11.500c-3 0-6.500-2-7-5z" fill="#e2e2e2" stroke="#6e6e6e" stroke-width="1"/><ellipse cx="843.500" cy="148" rx="3.800" ry="2.300" transform="rotate(35 843.500 148)" fill="#f4f4f4" stroke="#6e6e6e" stroke-width=".9"/><path d="M846 131.500h7l-3.500 3.500h3l-9 6 3-4.500h-3.500z" fill="#f9b51c" stroke="#c9441a" stroke-width=".7"/><text x="850" y="150.500" font-family="Liberation Serif,serif" font-size="12" fill="#3a78ad">A</text>
 <!-- view orientation -->
 <path d="M866.500 137.500h12v11.500h-12z" fill="#86c3e6" stroke="#3a3a3a" stroke-width="1.100"/><path d="M866.500 137.500l5.500-5.500h12v11.500l-5.500 5.500M878.500 137.500l5.500-5.500" stroke="#3a3a3a" stroke-width="1.100"/><path d="M881 134.500v5M879.500 138l1.500 1.500 1.500-1.500M879.500 144h4M881 142.500l-1.500 1.500 1.500 1.500" stroke="#3a3a3a" stroke-width=".8"/>
 <!-- display style -->
 <path d="M907 134l6.500-2.500 8.500 2v13l-8.500 3.500-6.500-3z" fill="#f2f6f9" stroke="#5a5a5a" stroke-width="1.100"/><path d="M907 134v13l6.500 3v-13.500z" fill="#86c3e6" stroke="#3a5a76" stroke-width=".9"/><path d="M913.500 136.500l8.500-3" stroke="#5a5a5a" stroke-width="1"/><path d="M915.500 137v11" stroke="#d6dde2" stroke-width="2"/>
 <!-- hide/show -->
 <path d="M947 141.500c3-5 13-5 17 0-4 5-14 5-17 0z" fill="#e6e6e6" stroke="#6e6e6e" stroke-width="1.100"/><circle cx="955.500" cy="141.500" r="3.200" fill="#555"/><path d="M955.500 133v17" stroke="#333" stroke-width="1.200"/>
 <!-- edit appearance (disabled) -->
 <circle cx="994" cy="139" r="7.500" fill="#e9e9e9"/><path d="M994 148l8-7 3 3-8 7z" fill="#dcdcdc" stroke="#cfcfcf" stroke-width=".8"/>
 <!-- apply scene (disabled) -->
 <circle cx="1020" cy="139.500" r="7.500" fill="#e6e6e6"/><path d="M1011 151l3-6h13l3 6z" fill="#dedede"/><path d="M1014 148h13" stroke="#f2f2f2" stroke-dasharray="2 2"/>
 <!-- view settings -->
 <rect x="1053" y="134" width="17" height="11" fill="#e2e2e2" stroke="#444" stroke-width="1.300"/><path d="M1061.500 145v4M1057 149.500h9" stroke="#444" stroke-width="1.400"/>
</svg>
<div class="arr" style="left:890px;top:139px;border-left-width:3px;border-right-width:3px;border-top-width:3.500px"></div>
<div class="arr" style="left:931px;top:139px;border-left-width:3px;border-right-width:3px;border-top-width:3.500px"></div>
<div class="arr" style="left:971px;top:139px;border-left-width:3px;border-right-width:3px;border-top-width:3.500px"></div>
<div class="arr" style="left:1037px;top:139px;border-left-width:3px;border-right-width:3px;border-top-width:3.500px"></div>
<div class="arr" style="left:1077px;top:139px;border-left-width:3px;border-right-width:3px;border-top-width:3.500px"></div>

<!-- doc window controls -->
<svg style="left:1450px;top:132px" width="124" height="18" viewBox="1450 132 124 18" fill="none" stroke="#a8a8a8" stroke-width="1.300">
 <rect x="1453" y="134.500" width="11" height="13"/><path d="M1458.500 138l-3.500 3 3.500 3z" fill="#a8a8a8" stroke="none"/>
 <rect x="1479" y="134.500" width="11" height="13"/><path d="M1485 138l3.500 3-3.500 3z" fill="#a8a8a8" stroke="none"/>
 <path d="M1506 146h10" stroke-width="1.600"/>
 <rect x="1530.500" y="138.500" width="9" height="8"/><path d="M1534 138.500v-3.500h10v8h-4.500"/>
 <path d="M1558 136l10 10M1568 136l-10 10"/>
</svg>

<!-- confirmation corner -->
<svg style="left:1478px;top:160px" width="76" height="58" viewBox="1478 160 76 58" fill="none">
 <path d="M1481.500 172.500l11.500 9 13.500-16.500" stroke="#d3ebcc" stroke-width="5.500"/>
 <path d="M1528.500 194.500l17 17M1545.500 194.500l-17 17" stroke="#f9d3d3" stroke-width="7.500" stroke-linecap="square"/>
</svg>

<!-- task pane tabs -->
<div class="tp" style="top:177px"></div>
<div class="tp" style="top:201px;background:#f6f6f6"></div>
<div class="tp" style="top:225px"></div>
<div class="tp" style="top:249px"></div>
<div class="tp" style="top:273px"></div>
<div class="tp" style="top:297px"></div>
<div class="tp" style="top:321px"></div>
<svg style="left:1558px;top:177px;z-index:4" width="25" height="170" viewBox="1558 177 25 170" fill="none">
 <!-- home -->
 <path d="M1561.500 189.500l9-8.500 9 8.500" stroke="#1d5f8f" stroke-width="2.600"/><path d="M1564.500 188.500v8h11v-8" fill="#fff" stroke="#333" stroke-width="1.200"/><rect x="1568.500" y="191.500" width="3.500" height="5" stroke="#333" stroke-width="1"/>
 <!-- design library (books) -->
 <path d="M1563.500 208.500l3-2.500 2.500 1.500v12l-3 2-2.500-1.500zM1566.500 206l1.500-1.500 3 1.500v12.500l-2 1.500M1569.500 204.700l2-1.500 3 1.500v12.500l-3.500 2M1573 203.400l1.500-1 2.500 1.500v12.500l-2.500 1.800" fill="#fff" stroke="#444" stroke-width="1.100"/>
 <!-- file explorer -->
 <path d="M1560.500 245.500v-15h6.500l2 2.500h7.500v3" fill="#ececec" stroke="#555" stroke-width="1.200"/><path d="M1560.500 245.500l4.500-10h15l-5 10z" fill="#fff" stroke="#555" stroke-width="1.200"/>
 <!-- view palette -->
 <rect x="1562.500" y="253.500" width="16" height="15" rx="1.500" fill="#fff" stroke="#444" stroke-width="1.200"/><path d="M1565 256.500h8v3h-2.500v4h3v3h-9v-3h3v-4h-2.500z" fill="#f2c418" stroke="#8a6a10" stroke-width=".7"/><rect x="1575" y="256" width="2.500" height="2.500" fill="#f2c418" stroke="#8a6a10" stroke-width=".5"/><rect x="1575" y="261" width="2.500" height="5.500" fill="#ccc" stroke="#666" stroke-width=".5"/>
 <!-- appearances ball -->
 <circle cx="1570.500" cy="285" r="7.800" fill="#d42a2a"/><path d="M1570.500 285v-7.800a7.800 7.800 0 0 0-7.800 7.800z" fill="#2f6fd0"/><path d="M1570.500 285h-7.800a7.800 7.800 0 0 0 7.800 7.800z" fill="#3aa83a"/><path d="M1570.500 285v7.800a7.800 7.800 0 0 0 7.800-7.800z" fill="#f0c020"/><ellipse cx="1568" cy="281" rx="3.500" ry="2" fill="#fff" opacity=".45"/>
 <!-- custom properties -->
 <rect x="1562.500" y="300.500" width="16" height="16" rx="1" fill="#fff" stroke="#2a4a66" stroke-width="1.200"/><rect x="1562.500" y="300.500" width="16" height="3" fill="#4f9fd8"/><path d="M1565 307h3M1570 307h6.500M1565 310.500h3M1570 310.500h6.500M1565 314h3M1570 314h6.500" stroke="#2a5f8f" stroke-width="1.300"/>
 <!-- solidworks forum -->
 <path d="M1563 329l7-3.500 7 3v8.500l-7 4-7-3.500z" fill="#d4262c" stroke="#8f1a1a" stroke-width=".8"/><path d="M1563 329l7 3 7-3.500M1570 332v9" stroke="#f28a8a" stroke-width=".8"/><circle cx="1568" cy="334" r="3.200" fill="#fff" fill-opacity=".85" stroke="#1d5f8f" stroke-width=".8"/><path d="M1570.500 336.500l5 5" stroke="#2f7fc4" stroke-width="2"/>
</svg>

<!-- reference triad -->
<svg style="left:244px;top:1160px" width="60" height="70" viewBox="244 1160 60 70" fill="none">
 <path d="M283.600 1192.600l-20 2" stroke="#1c1cb4" stroke-width="3.600"/><path d="M264.500 1189.800l-9.500 5 9.500 4.600z" fill="#16168c"/>
 <path d="M283.600 1192.600l4.200-11.500" stroke="#a81c1c" stroke-width="3.600"/><circle cx="287.800" cy="1180.500" r="3.800" fill="#b81c1c"/><path d="M286 1177.500l3.500-1.500 1 3" stroke="#5a0c0c" stroke-width="1"/>
 <path d="M283.600 1192.600l5.400 17" stroke="#1c6c1c" stroke-width="3.600"/><path d="M284.200 1210l8.600-2-2.400 9.600z" fill="#145414"/>
 <text x="247.500" y="1199" font-family="Liberation Sans,sans-serif" font-size="11" font-style="italic" fill="#1a1aff">Z</text>
 <text x="287.500" y="1176" font-family="Liberation Sans,sans-serif" font-size="11" font-style="italic" fill="#f01a1a">X</text>
 <text x="288" y="1225" font-family="Liberation Sans,sans-serif" font-size="11" font-style="italic" fill="#1a8a1a">Y</text>
</svg>
<svg style="left:243px;top:125px" width="1339" height="1126" viewBox="243 125 1339 1126">
<defs><clipPath id="vp"><rect x="243" y="125" width="1339" height="1126"/></clipPath></defs><g clip-path="url(#vp)">
<polygon points="810.7,543.0 822.8,541.4 826.5,533.1 827.0,531.5 1584.0,476.9 1584.0,670.0 1478.6,940.0 1356.8,1252.0 530.8,1252.0" fill="#4f4e4c" />
<polygon points="852.6,551.7 1071.5,535.1 1029.7,565.5 860.9,577.4" fill="#85827e" />
<polygon points="1118.2,531.9 1299.6,519.2 1306.7,546.0 1125.7,558.5" fill="#85827e" />
<polygon points="1343.9,516.1 1563.3,500.7 1551.9,527.7 1364.9,540.9" fill="#85827e" />
<polygon points="1584.0,540.5 1584.0,584.0 1443.3,940.0 1320.7,1252.0 1302.3,1252.0 1424.3,940.0" fill="#6b6864" />
<polygon points="852.4,551.8 860.7,576.4 595.5,1252.0 577.1,1252.0" fill="#834266" />
<polygon points="1076.5,531.8 1116.9,528.9 766.3,773.7 779.6,738.3" fill="#4f4e4c" />
<polygon points="1116.9,531.9 1118.2,534.5 765.1,778.1 766.3,773.7" fill="#66635f" />
<polygon points="1118.2,534.5 1125.7,558.5 772.0,802.1 765.1,778.1" fill="#96938f" />
<polygon points="1299.3,517.9 1302.7,518.0 1478.0,721.3 1475.5,722.8" fill="#5c5a57" />
<polygon points="1299.9,521.5 1306.7,546.0 1471.0,735.4 1475.5,723.5" fill="#605e5a" />
<polygon points="1339.7,1064.3 1338.4,1068.9 1075.5,1252.0 1068.0,1252.0" fill="#716e6a" />
<polygon points="1338.4,1068.9 1322.0,1111.8 1119.7,1252.0 1075.5,1252.0" fill="#96938f" />
<polygon points="643.5,1081.0 788.0,1252.0 746.4,1252.0 630.1,1116.9" fill="#4f4e4c" />
<polygon points="630.1,1118.0 636.4,1142.0 728.7,1252.0 742.6,1252.0" fill="#605e5a" />
<polyline points="530.8,1252.0 810.7,543.0 822.8,541.4" fill="none" stroke="#0a0a0a" stroke-width="1.4" />
<line x1="827.0" y1="531.5" x2="1584.0" y2="476.9" stroke="#0a0a0a" stroke-width="1.4" />
<polyline points="1584.0,670.0 1478.6,940.0 1356.8,1252.0" fill="none" stroke="#0a0a0a" stroke-width="1.4" />
<polyline points="1580.0,670.0 1474.6,940.0 1352.8,1252.0" fill="none" stroke="#0a0a0a" stroke-width="1.1" />
<line x1="825.9" y1="533.1" x2="542.9" y2="1252.0" stroke="#0a0a0a" stroke-width="1.1" />
<line x1="827.0" y1="533.1" x2="544.0" y2="1252.0" stroke="#4a9be8" stroke-width="1.2" />
<polyline points="826.7,533.1 834.8,558.1 561.4,1252.0" fill="none" stroke="#4a9be8" stroke-width="1.2" />
<line x1="827.2" y1="532.2" x2="852.4" y2="551.2" stroke="#0a0a0a" stroke-width="1.9" />
<line x1="849.4" y1="549.9" x2="572.4" y2="1252.0" stroke="#0a0a0a" stroke-width="1.6" />
<line x1="850.5" y1="547.6" x2="1564.6" y2="497.7" stroke="#0a0a0a" stroke-width="1.5" />
<line x1="1564.6" y1="497.7" x2="1584.0" y2="486.3" stroke="#0a0a0a" stroke-width="1.4" />
<line x1="852.6" y1="551.7" x2="1071.5" y2="535.1" stroke="#0a0a0a" stroke-width="1.1" />
<line x1="860.9" y1="577.4" x2="1029.7" y2="565.5" stroke="#0a0a0a" stroke-width="1.4" />
<line x1="1118.2" y1="531.9" x2="1299.6" y2="519.2" stroke="#0a0a0a" stroke-width="1.1" />
<line x1="1125.7" y1="558.5" x2="1306.7" y2="546.0" stroke="#0a0a0a" stroke-width="1.4" />
<line x1="1343.9" y1="516.1" x2="1563.3" y2="500.7" stroke="#0a0a0a" stroke-width="1.1" />
<line x1="1364.9" y1="540.9" x2="1551.9" y2="527.7" stroke="#0a0a0a" stroke-width="1.4" />
<line x1="1076.5" y1="531.8" x2="779.6" y2="738.3" stroke="#0a0a0a" stroke-width="1.5" />
<line x1="1116.9" y1="531.9" x2="766.3" y2="773.7" stroke="#0a0a0a" stroke-width="1.4" />
<line x1="1118.2" y1="534.5" x2="765.1" y2="778.1" stroke="#0a0a0a" stroke-width="1.2" />
<line x1="1125.7" y1="558.5" x2="772.0" y2="802.1" stroke="#0a0a0a" stroke-width="1.0" />
<line x1="1125.7" y1="558.5" x2="772.0" y2="802.1" stroke="#0a0a0a" stroke-width="1.6" stroke-dasharray="1.300 1.100"/>
<line x1="1118.2" y1="534.5" x2="1125.7" y2="558.5" stroke="#0a0a0a" stroke-width="1.2" />
<line x1="765.1" y1="778.1" x2="772.0" y2="802.1" stroke="#0a0a0a" stroke-width="1.1" />
<line x1="1299.3" y1="517.9" x2="1475.5" y2="722.8" stroke="#0a0a0a" stroke-width="1.4" />
<line x1="1302.7" y1="518.0" x2="1478.0" y2="721.3" stroke="#0a0a0a" stroke-width="1.2" />
<line x1="1306.7" y1="546.0" x2="1471.0" y2="735.4" stroke="#0a0a0a" stroke-width="1.3" />
<line x1="1299.5" y1="518.5" x2="1306.7" y2="546.0" stroke="#0a0a0a" stroke-width="1.1" />
<line x1="1339.7" y1="515.6" x2="1490.0" y2="688.7" stroke="#0a0a0a" stroke-width="1.4" />
<line x1="1343.1" y1="516.2" x2="1491.6" y2="685.5" stroke="#0a0a0a" stroke-width="1.1" />
<line x1="1563.3" y1="500.4" x2="1268.4" y2="1252.0" stroke="#0a0a0a" stroke-width="1.0" />
<line x1="1563.3" y1="500.4" x2="1268.4" y2="1252.0" stroke="#0a0a0a" stroke-width="1.7" stroke-dasharray="1.300 1.100"/>
<polyline points="1581.0,533.5 1420.5,940.0 1298.0,1252.0" fill="none" stroke="#0a0a0a" stroke-width="1.2" />
<polyline points="1584.0,540.5 1424.3,940.0 1302.3,1252.0" fill="none" stroke="#0a0a0a" stroke-width="1.2" />
<polyline points="1584.0,584.0 1443.3,940.0 1320.7,1252.0" fill="none" stroke="#0a0a0a" stroke-width="1.2" />
<line x1="1352.3" y1="1032.2" x2="1035.0" y2="1250.4" stroke="#0a0a0a" stroke-width="1.5" />
<line x1="1339.7" y1="1064.3" x2="1068.0" y2="1252.0" stroke="#0a0a0a" stroke-width="1.4" />
<line x1="1338.4" y1="1068.9" x2="1075.5" y2="1252.0" stroke="#0a0a0a" stroke-width="1.2" />
<line x1="1322.0" y1="1111.8" x2="1119.7" y2="1252.0" stroke="#0a0a0a" stroke-width="1.0" />
<line x1="1322.0" y1="1111.8" x2="1119.7" y2="1252.0" stroke="#0a0a0a" stroke-width="1.6" stroke-dasharray="1.300 1.100"/>
<line x1="643.5" y1="1081.0" x2="788.0" y2="1252.0" stroke="#0a0a0a" stroke-width="1.4" />
<line x1="645.2" y1="1080.0" x2="791.0" y2="1252.0" stroke="#0a0a0a" stroke-width="1.1" />
<line x1="630.1" y1="1116.9" x2="746.4" y2="1252.0" stroke="#0a0a0a" stroke-width="1.4" />
<line x1="630.1" y1="1118.5" x2="742.6" y2="1252.0" stroke="#0a0a0a" stroke-width="1.1" />
<line x1="636.4" y1="1142.0" x2="728.7" y2="1252.0" stroke="#0a0a0a" stroke-width="1.3" />
<line x1="630.1" y1="1117.0" x2="636.4" y2="1142.0" stroke="#0a0a0a" stroke-width="1.1" />
<polyline points="577.1,1252.0 852.4,551.8 860.7,576.4 595.5,1252.0" fill="none" stroke="#f07fc0" stroke-width="1.2" />
<path d="M803.300 603.600h6M806.300 600.600v6" stroke="#4a9be8" stroke-width="1.100"/>
<path d="M835.300 615.600h6M838.300 612.600v6" stroke="#f07fc0" stroke-width="1.100"/>
</g></svg>
<!-- ===== bottom tabs + status bar ===== -->
<div class="a" style="left:0;top:1252px;width:1583px;height:33px;background:#f6f6f6"></div>
<div class="a" style="left:0;top:1251px;width:1583px;height:1px;background:#86959b"></div>
<div class="a" style="left:0;top:1266px;width:1583px;height:1px;background:#9a9a9a"></div>
<div class="a" style="left:1582px;top:149px;width:1px;height:1102px;background:#f0f0f0"></div>
<div class="a" style="left:1581px;top:1252px;width:1px;height:14px;background:#8fa3ab"></div>
<!-- sheet nav arrows -->
<div class="a" style="left:0;top:1249px;width:242px;height:1px;background:#cfcfcf"></div>
<div class="a" style="left:0;top:1250px;width:123px;height:2px;background:#f6f6f6"></div>
<div class="a" style="left:1px;top:1251px;width:65px;height:15px;background:#b6b6b6"></div>
<div class="a" style="left:1px;top:1251px;width:65px;height:1px;background:#5e5e5e"></div>
<svg style="left:1px;top:1252px" width="66" height="14" viewBox="0 0 66 14" fill="#8c8c8c" stroke="#8c8c8c" stroke-width="1">
 <path d="M16.500 0v14M32.500 0v14M48.500 0v14M64.500 0v14M.5 0v14" stroke="#909090"/>
 <path d="M11 3l-5 4 5 4zM5 3v8" /><path d="M27 3l-5 4 5 4z"/><path d="M38 3l5 4-5 4z"/><path d="M54 3l5 4-5 4zM60 3v8"/>
</svg>
<div class="btab" style="left:66px;width:58px;background:#f6f6f6;font-weight:700;border-color:#f6f6f6 #a6a6a6;text-align:left;padding-left:13px;letter-spacing:0">Model</div>
<div class="btab" style="left:123px;width:69px;text-align:left;padding-left:10px;letter-spacing:-.35px">3D Views</div>
<div class="btab" style="left:191px;width:109px;text-align:left;padding-left:9px;letter-spacing:.1px">Motion Study 1</div>
<div class="t" style="left:1px;top:1270px;font-size:12px;letter-spacing:-.2px">Select face pairs manually or use Find Face Pairs to&nbsp; automatically recognize face pairs.</div>
<div class="t" style="left:1279px;top:1270px;font-size:12px">Editing Part</div>
<svg style="left:1367px;top:1268px" width="18" height="16" viewBox="0 0 18 16"><path d="M1.500 10L6 2l4.500 8z" fill="#f5b51a" stroke="#8a5a10" stroke-width=".8"/><path d="M6 5v2.800M6 8.800v.6" stroke="#222" stroke-width="1"/><path d="M8 8l5-5M10 2.500h3.500V6" fill="none" stroke="#222" stroke-width="1.400"/><path d="M2 15v-2M5 15v-3M8 15v-4M11 15v-5M14 15v-7" stroke="#1d5f8f" stroke-width="1.600"/></svg>
<div class="t" style="left:1458px;top:1270px;font-size:12px;color:#a8a8a8">MMGS</div>
<div class="a" style="left:1514px;top:1274px;width:0;height:0;border-left:3px solid transparent;border-right:3px solid transparent;border-bottom:4px solid #8a8a8a"></div>
<svg style="left:1545px;top:1268px" width="18" height="16" viewBox="0 0 18 16" fill="none" stroke="#333" stroke-width="1.100"><path d="M1.500 5l7-3 8 4v4l-7 4-8-5z"/><path d="M1.500 5l8 5 7-4M9.500 10v4" /><circle cx="7" cy="5.500" r="1.500"/><path d="M10 7h3"/></svg>
<svg style="left:1571px;top:1273px" width="10" height="10" viewBox="0 0 10 10" fill="#b4b4b4"><rect x="7" y="1" width="2" height="2"/><rect x="4" y="4" width="2" height="2"/><rect x="7" y="4" width="2" height="2"/><rect x="1" y="7" width="2" height="2"/><rect x="4" y="7" width="2" height="2"/><rect x="7" y="7" width="2" height="2"/></svg>
</body></html>
